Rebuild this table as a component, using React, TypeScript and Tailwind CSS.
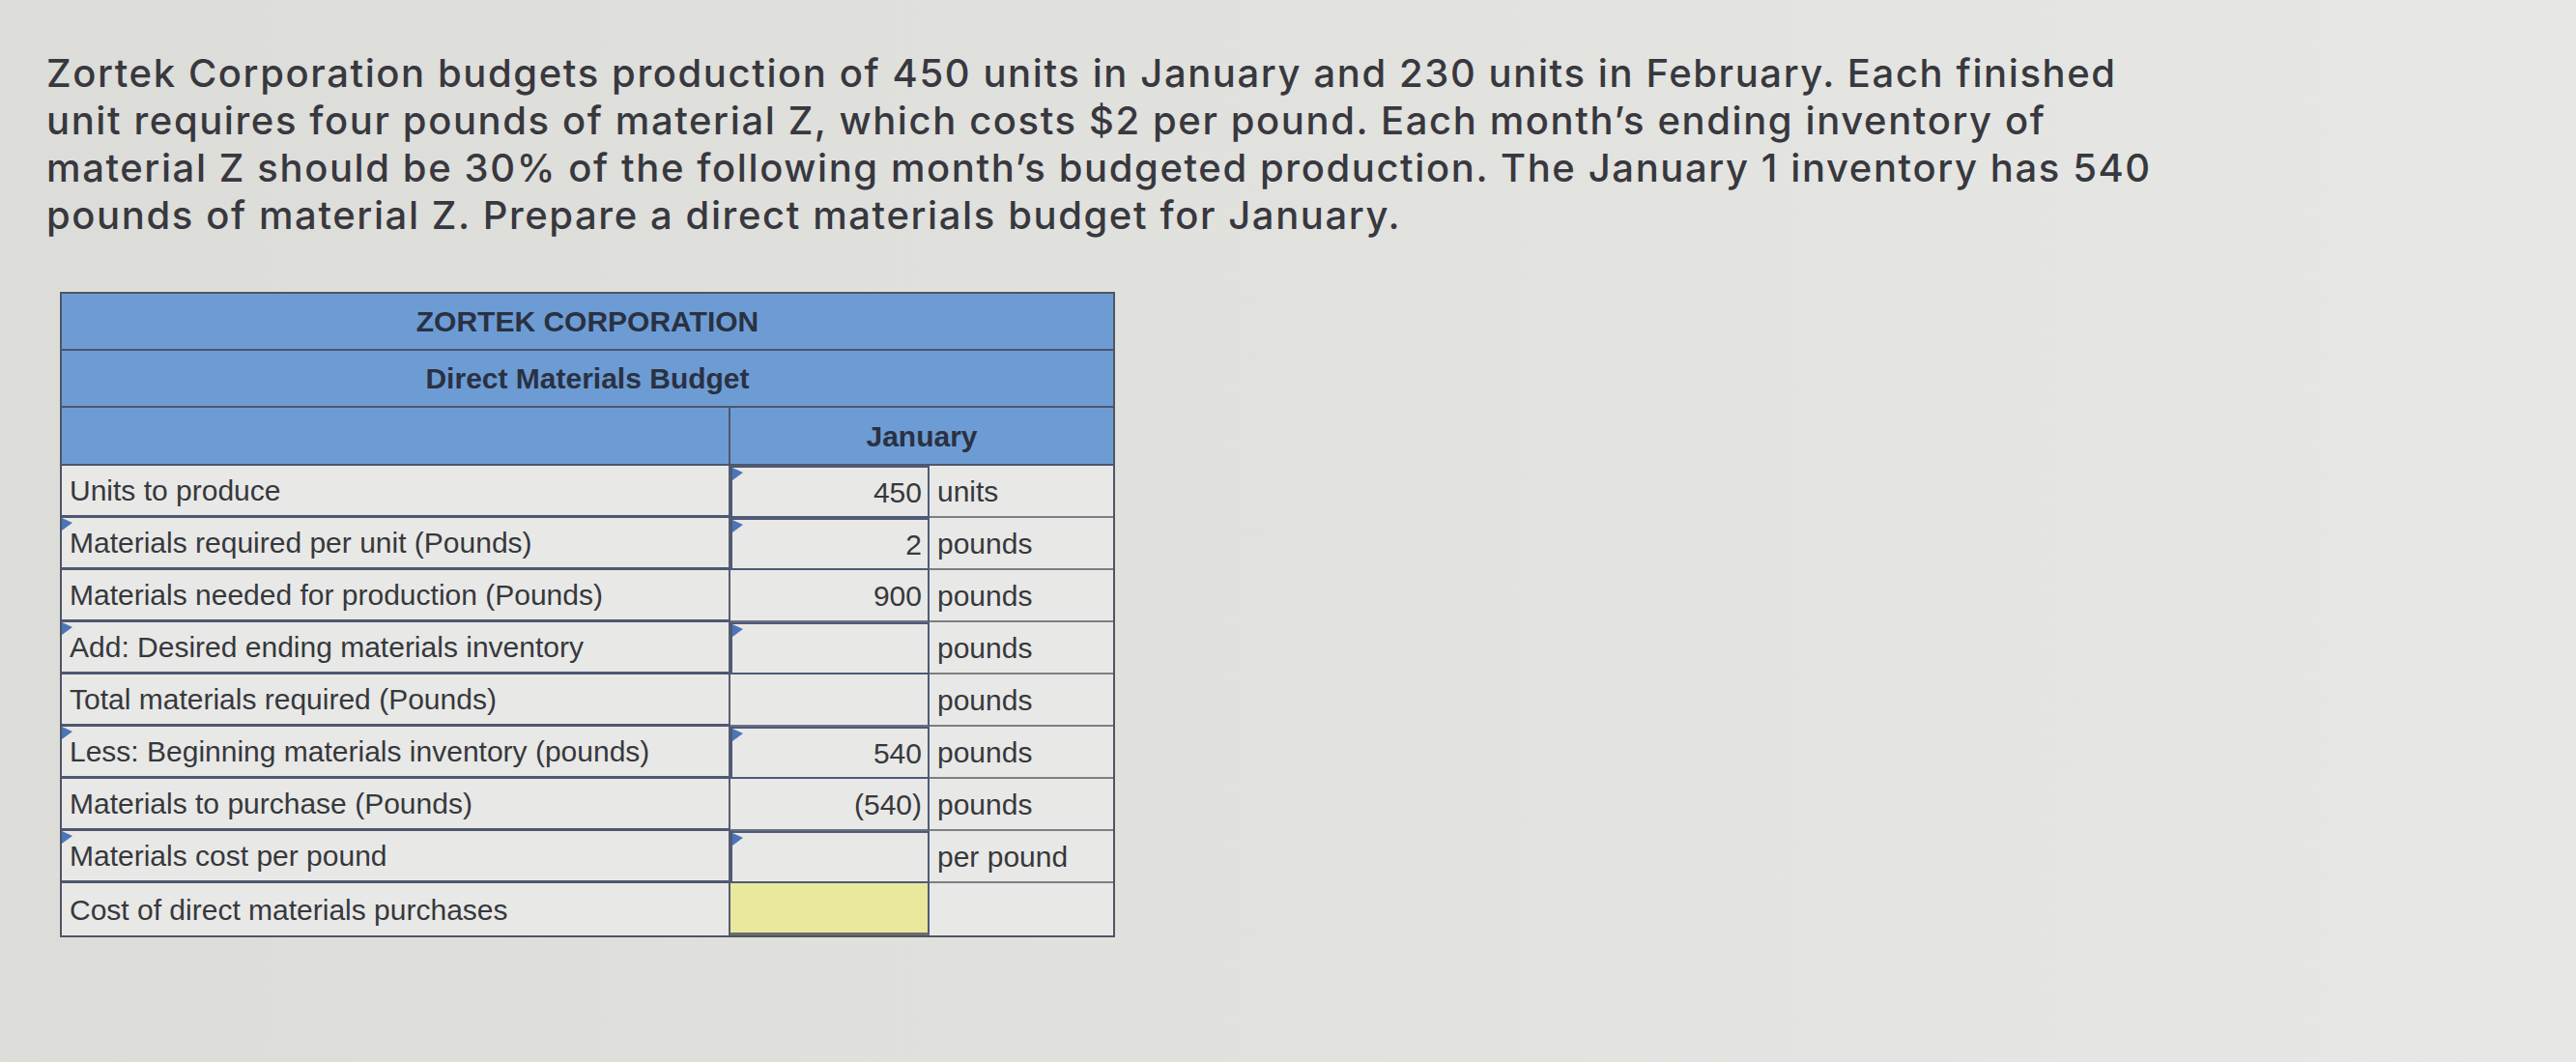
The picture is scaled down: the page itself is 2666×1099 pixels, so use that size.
import React from "react";

const Marker = () => (
  <svg
    className="absolute left-0 top-0"
    width="12"
    height="14"
    viewBox="0 0 12 14"
  >
    <polygon points="0,0 11,5 0,13" fill="#4a76b8" />
  </svg>
);

type Row = {
  label: string;
  value: string;
  unit: string;
  labelMark?: boolean;
  valueMark?: boolean;
  yellow?: boolean;
};

const rows: Row[] = [
  { label: "Units to produce", value: "450", unit: "units", valueMark: true },
  {
    label: "Materials required per unit (Pounds)",
    value: "2",
    unit: "pounds",
    labelMark: true,
    valueMark: true,
  },
  { label: "Materials needed for production (Pounds)", value: "900", unit: "pounds" },
  {
    label: "Add: Desired ending materials inventory",
    value: "",
    unit: "pounds",
    labelMark: true,
    valueMark: true,
  },
  { label: "Total materials required (Pounds)", value: "", unit: "pounds" },
  {
    label: "Less: Beginning materials inventory (pounds)",
    value: "540",
    unit: "pounds",
    labelMark: true,
    valueMark: true,
  },
  { label: "Materials to purchase (Pounds)", value: "(540)", unit: "pounds" },
  {
    label: "Materials cost per pound",
    value: "",
    unit: "per pound",
    labelMark: true,
    valueMark: true,
  },
  { label: "Cost of direct materials purchases", value: "", unit: "", yellow: true },
];

export default function App() {
  return (
    <div className="min-h-screen w-full bg-gradient-to-r from-[#dcdcd9] via-[#e1e1de] to-[#e7e8e5] pb-[120px]">
      <p className="pl-[48px] pt-[51px] font-['Inter',sans-serif] text-[40px] font-medium leading-[49px] tracking-[1.6px] text-[#38383e]">
        Zortek Corporation budgets production of 450 units in January and 230 units in February. Each finished
        <br />
        unit requires four pounds of material Z, which costs $2 per pound. Each month’s ending inventory of
        <br />
        material Z should be 30% of the following month’s budgeted production. The January 1 inventory has 540
        <br />
        pounds of material Z. Prepare a direct materials budget for January.
      </p>

      <div className="ml-[62px] mt-[55px] w-[1092px] border-2 border-[#4f5565] font-['Liberation_Sans',Arial,sans-serif]">
        <div className="flex h-[59px] items-center justify-center border-b-2 border-[#4d576c] bg-[#6d9cd4] text-[30px] font-bold text-[#2a3142]">
          ZORTEK CORPORATION
        </div>
        <div className="flex h-[59px] items-center justify-center border-b-2 border-[#4d576c] bg-[#6d9cd4] text-[30px] font-bold text-[#2a3142]">
          Direct Materials Budget
        </div>
        <div className="grid h-[60px] grid-cols-[692px_1fr] border-b-2 border-[#4d576c] bg-[#6d9cd4]">
          <div className="border-r-2 border-[#4d576c]" />
          <div className="flex items-center justify-center text-[30px] font-bold text-[#2a3142]">
            January
          </div>
        </div>

        {rows.map((r, i) => {
          const last = i === rows.length - 1;
          return (
            <div key={i} className="grid h-[54px] grid-cols-[692px_206px_1fr] text-[30px] text-[#36383d]">
              <div
                className={`relative flex items-center border-r-2 border-[#555d70] bg-[#e8e8e6] pl-[8px] ${
                  last ? "" : "border-b-[3px] border-b-[#4f5770]"
                }`}
              >
                {r.labelMark && <Marker />}
                <span className="whitespace-nowrap">{r.label}</span>
              </div>
              <div
                className={`relative flex items-center justify-end pr-[6px] ${
                  r.yellow ? "bg-[#e9e89d]" : "bg-[#e8e8e6]"
                } ${
                  r.valueMark
                    ? "border-2 border-[#4e5a78]"
                    : last
                    ? "border-b-[3px] border-b-[#6b6d6a] border-r-2 border-r-[#4e5a78]"
                    : "border-b-2 border-b-[#6a7080] border-r-2 border-r-[#4e5a78]"
                }`}
              >
                {r.valueMark && <Marker />}
                <span>{r.value}</span>
              </div>
              <div
                className={`flex items-center bg-[#e8e8e6] pl-[8px] ${
                  last ? "" : "border-b-2 border-b-[#7c7e82]"
                }`}
              >
                <span className="whitespace-nowrap">{r.unit}</span>
              </div>
            </div>
          );
        })}
      </div>
    </div>
  );
}
